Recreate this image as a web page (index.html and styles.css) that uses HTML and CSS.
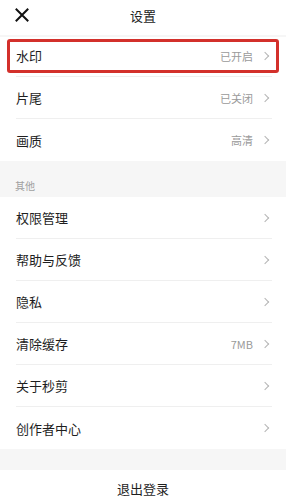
FILE: index.html
```html
<!DOCTYPE html>
<html lang="zh">
<head>
<meta charset="utf-8">
<link rel="stylesheet" href="styles.css">
</head>
<body>
<div class="page">
  <header class="header">
    <svg class="close" width="14" height="14" viewBox="0 0 14 14"><path d="M1.5 1.5L12.5 12.5M12.5 1.5L1.5 12.5" stroke="#111" stroke-width="2" fill="none" stroke-linecap="square"/></svg>
    <div class="title">设置</div>
  </header>
  <section class="group first">
    <div class="row highlight"><span class="label">水印</span><span class="value">已开启</span><span class="chev"></span></div>
    <div class="row"><span class="label">片尾</span><span class="value">已关闭</span><span class="chev"></span></div>
    <div class="row last"><span class="label">画质</span><span class="value">高清</span><span class="chev"></span></div>
  </section>
  <div class="section-title">其他</div>
  <section class="group">
    <div class="row"><span class="label">权限管理</span><span class="chev"></span></div>
    <div class="row"><span class="label">帮助与反馈</span><span class="chev"></span></div>
    <div class="row"><span class="label">隐私</span><span class="chev"></span></div>
    <div class="row"><span class="label">清除缓存</span><span class="value">7MB</span><span class="chev"></span></div>
    <div class="row"><span class="label">关于秒剪</span><span class="chev"></span></div>
    <div class="row last"><span class="label">创作者中心</span><span class="chev"></span></div>
  </section>
  <div class="logout">退出登录</div>
</div>
</body>
</html>
```
FILE: styles.css
```css
* { box-sizing: border-box; }
html, body { margin: 0; padding: 0; }
body {
  background: #f6f6f6;
  font-family: "Noto Sans CJK SC", "Noto Sans", sans-serif;
  color: #222;
  width: 286px;
  height: 499px;
  overflow: hidden;
}
.page { display: flex; flex-direction: column; }
.header {
  height: 35px;
  background: #fff;
  display: flex;
  align-items: center;
  justify-content: center;
  position: relative;
  margin-bottom: 2px;
  padding-bottom: 5px;
}
.close { position: absolute; left: 15px; top: 8px; }
.title { font-size: 13px; color: #222; }
.group { background: #fff; }
.row {
  height: 42px;
  margin: 0 14px 0 16px;
  display: flex;
  align-items: center;
  border-bottom: 1px solid #efefef;
  position: relative;
}
.row.last { border-bottom: none; }
.group.first .row:first-child { height: 40px; padding-bottom: 2px; }
.label { font-size: 13px; flex: 1; color: #1e1e1e; }
.value { font-size: 11px; color: #9a9a9a; margin-right: 9px; }
.chev {
  width: 6px; height: 6px;
  border-top: 1px solid #b5b5b5;
  border-right: 1px solid #b5b5b5;
  transform: rotate(45deg);
  margin-right: 4px;
}
.highlight::before {
  content: "";
  position: absolute;
  left: -9px; right: -7px; top: 2px; bottom: 3px;
  border: 3px solid #d3302b;
  border-radius: 3px;
}
.section-title {
  height: 36px;
  font-size: 10px;
  color: #a0a0a0;
  padding: 18px 0 0 15px;
  line-height: 14px;
}
.logout {
  margin-top: 21px;
  background: #fff;
  height: 40px;
  display: flex;
  justify-content: center;
  align-items: flex-start;
  padding-top: 12px;
  font-size: 13px;
  line-height: 14px;
  color: #1e1e1e;
}
```
